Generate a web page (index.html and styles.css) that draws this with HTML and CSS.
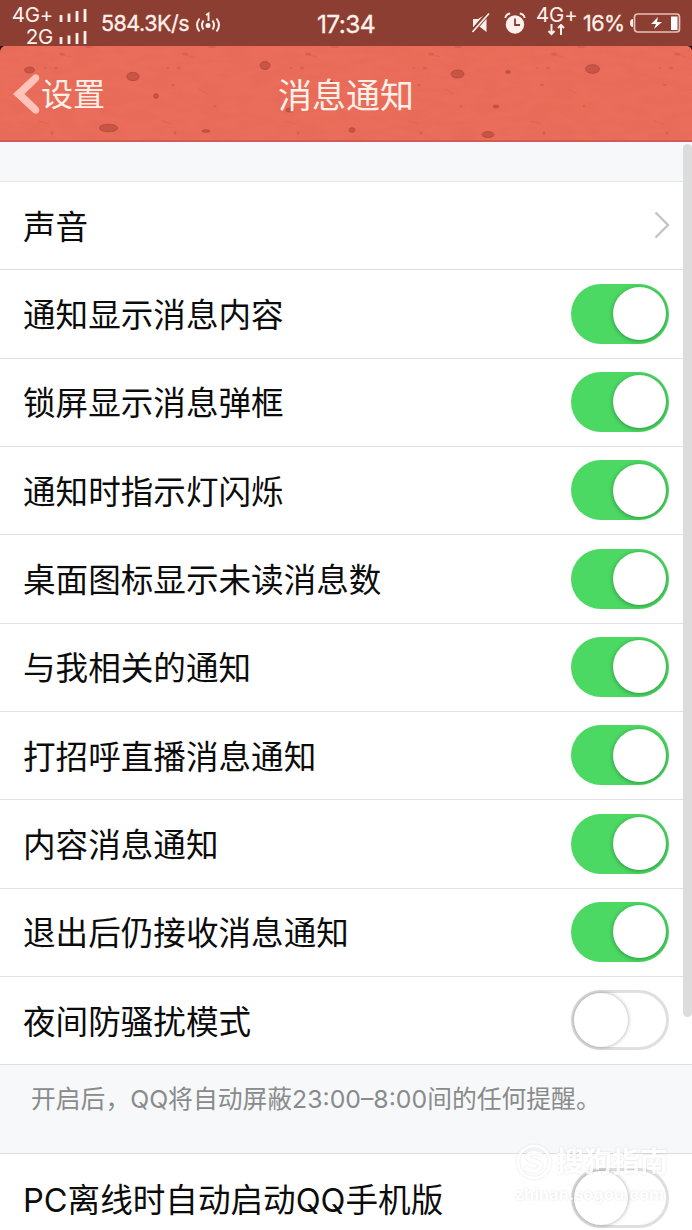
FILE: index.html
```
<!DOCTYPE html>
<html lang="zh-CN">
<head>
<meta charset="utf-8">
<title>消息通知</title>
<link rel="stylesheet" href="styles.css">
</head>
<body>
<div class="screen">
  <div class="status">
    <div class="carriers">
      <div class="carrier"><span>4G+</span><svg width="28" height="15" viewBox="0 0 28 15"><path d="M2 7v7M10 5.500v8.500M18 3v11M26 1v13" stroke="#fff0eb" stroke-width="2.800"/></svg></div>
      <div class="carrier second"><span>2G</span><svg width="28" height="15" viewBox="0 0 28 15"><path d="M2 7v7M10 5.500v8.500M18 3v11M26 1v13" stroke="#fff0eb" stroke-width="2.800"/></svg></div>
    </div>
    <span class="speed">584.3K/s</span>
    <svg class="hotspot" width="26" height="22" viewBox="0 0 26 22" fill="none" stroke="#fff0eb" stroke-width="1.900"><circle cx="13" cy="14.500" r="2.500" fill="#fff0eb" stroke="none"/><path d="M11 4l2.500-1.500V10M8.500 9.500q-3 4.500 0 9M17.500 9.500q3 4.500 0 9M4.500 7.500q-5 6.500 0 13M21.500 7.500q5 6.500 0 13"/></svg>
    <span class="clock">17:34</span>
    <svg class="mute" width="20" height="22" viewBox="0 0 20 22"><path d="M2 7h5l8.500-5v18L9 15H2z" fill="#fff0eb"/><path d="M1 20L17.500 1" stroke="#8b3e31" stroke-width="4.500"/><path d="M1.500 20L18 1.500" stroke="#fff0eb" stroke-width="1.700"/></svg>
    <svg class="alarm" width="22" height="22" viewBox="0 0 22 22" fill="none" stroke="#fff0eb" stroke-width="1.800"><circle cx="11" cy="12.500" r="9.200" fill="#fff0eb" stroke="none"/><path d="M1.200 6q1-4 5-4.500M20.800 6q-1-4-5-4.500"/><path d="M11 6.500v6.500h5" stroke="#8b3e31"/></svg>
    <div class="data"><span>4G+</span><svg width="18" height="12" viewBox="0 0 18 12" fill="none" stroke="#fff0eb" stroke-width="2"><path d="M4.500 0v10M1.500 7l3 3 3-3M14 11V1M11 4l3-3 3 3"/></svg></div>
    <span class="percent">16%</span>
    <svg class="battery" width="52" height="21" viewBox="0 0 52 21"><path d="M3 6Q0 6 0 10t3 4z" fill="#fff0eb"/><rect x="4.500" y="1" width="45" height="18" rx="3" fill="none" stroke="#e9c1b7" stroke-width="1.700"/><path d="M28 4l-7 7h5l-2 5 8-7h-5z" fill="#fff"/><rect x="41" y="3.500" width="6.500" height="13.500" fill="#fff"/></svg>
  </div>

  <header class="header">
    <svg class="texture" width="692" height="96" viewBox="0 0 692 96">
      <defs>
        <pattern id="specks" width="123" height="96" patternUnits="userSpaceOnUse">
          <g fill="#b84739" opacity=".32"><ellipse cx="62" cy="8" rx="3" ry="1.500"/><ellipse cx="56" cy="22" rx="2" ry="1.500"/><ellipse cx="50" cy="39" rx="2" ry="1.300"/><circle cx="92" cy="60" r="1.500"/><ellipse cx="52" cy="87" rx="1.500" ry="2"/><ellipse cx="45" cy="22" rx="1.500" ry="1"/><ellipse cx="89" cy="1" rx="4" ry="1"/></g>
          <path d="M63 9l8 2M76 43l9 5M39 75l10 3" fill="none" stroke="#bf4c3d" stroke-width="1.200" opacity=".22"/>
        </pattern>
        <filter id="grain" x="0" y="0" width="100%" height="100%"><feTurbulence type="fractalNoise" baseFrequency=".04 .12" numOctaves="3" seed="4"/><feColorMatrix values="0 0 0 0 .55 0 0 0 0 .12 0 0 0 0 .07 .6 0 0 0 -.22"/></filter>
      </defs>
      <rect width="692" height="96" fill="#ea6c5a"/>
      <rect width="692" height="96" filter="url(#grain)" opacity=".3"/>
      <rect width="692" height="96" fill="url(#specks)"/>
      <g fill="#c85445" stroke="#b04a3b" stroke-width=".8"><ellipse cx="29.500" cy="24" rx="5" ry="3"/><ellipse cx="133" cy="30.500" rx="6.200" ry="4.200"/><circle cx="156" cy="50" r="2.300"/><ellipse cx="108.500" cy="82" rx="9.200" ry="3.800"/><ellipse cx="206" cy="85" rx="4" ry="1.200"/><ellipse cx="265" cy="19.500" rx="5" ry="4"/><ellipse cx="290" cy="64" rx="4" ry="2"/><circle cx="331" cy="36" r="1.700"/><ellipse cx="352" cy="84" rx="3" ry="2.300"/><ellipse cx="457.500" cy="28" rx="6.500" ry="4"/><ellipse cx="508" cy="26" rx="2.300" ry="1.300"/><ellipse cx="496" cy="60.500" rx="3" ry="1.300"/><ellipse cx="488" cy="88.500" rx="6" ry="3"/><ellipse cx="592.500" cy="23" rx="7" ry="4.300"/></g>
      <path d="M0 95h692" stroke="#d35b53" stroke-width="2"/>
      <path d="M0 0h4Q1 1 0 5zM692 0h-4q3 1 4 4z" fill="#260c0a"/>
    </svg>
    <div class="back">
      <svg width="29" height="44" viewBox="0 0 29 44"><path d="M22.500 3L2 22l20.500 19q3 2 5.200-.8 1.500-2.700-.7-5.200L13.500 22 27 9q2.200-2.500.7-5.200-2.200-2.800-5.200-.8z" fill="#ffc3b9"/></svg>
      <span>设置</span>
    </div>
    <h1 class="title">消息通知</h1>
  </header>

  <main class="content">
    <div class="spacer"></div>
    <section class="rows">
      <div class="row"><span>声音</span><svg class="chevron" width="16" height="28" viewBox="0 0 16 28"><path d="M1.500 1.500L14 14 1.500 26.500" fill="none" stroke="#c3c3c6" stroke-width="2.400"/></svg></div>
      <div class="row"><span>通知显示消息内容</span><i class="toggle on"></i></div>
      <div class="row"><span>锁屏显示消息弹框</span><i class="toggle on"></i></div>
      <div class="row"><span>通知时指示灯闪烁</span><i class="toggle on"></i></div>
      <div class="row"><span>桌面图标显示未读消息数</span><i class="toggle on"></i></div>
      <div class="row"><span>与我相关的通知</span><i class="toggle on"></i></div>
      <div class="row"><span>打招呼直播消息通知</span><i class="toggle on"></i></div>
      <div class="row"><span>内容消息通知</span><i class="toggle on"></i></div>
      <div class="row"><span>退出后仍接收消息通知</span><i class="toggle on"></i></div>
      <div class="row"><span>夜间防骚扰模式</span><i class="toggle"></i></div>
    </section>
    <p class="hint">开启后，QQ将自动屏蔽23:00–8:00间的任何提醒。</p>
    <div class="row last"><span>PC离线时自动启动QQ手机版</span><i class="toggle"></i></div>
  </main>
  <div class="scrollbar"></div>
  <div class="watermark">
    <div class="brand"><svg width="38" height="38" viewBox="0 0 38 38" fill="none" stroke="#fff"><circle cx="19" cy="19" r="16" stroke-width="3"/><path d="M27 12q-8-4-13-1c-4 3 0 6 5 7s9 4 5 8q-5 4-14-1" stroke-width="4"/></svg><span>搜狗指南</span></div>
    <div class="url">zhinan.sogou.com</div>
  </div>
</div>
</body>
</html>
```
FILE: styles.css
```
* { box-sizing: border-box; }
body { margin: 0; font-family: Inter, "Noto Sans CJK SC", sans-serif; }
.screen { position: relative; width: 692px; height: 1230px; overflow: hidden; background: #fff; display: flex; flex-direction: column; }

.status { height: 46px; flex: none; display: flex; align-items: flex-start; background: #8b3e31; color: #fff0eb; line-height: 1; white-space: nowrap; }
.carriers { width: 87px; padding-top: 5px; display: flex; flex-direction: column; gap: 2px; }
.carrier { height: 20px; display: flex; justify-content: flex-end; gap: 6px; font-size: 20.5px; letter-spacing: -0.3px; }
.carrier svg { margin-top: 3px; }
.speed { width: 92px; margin: 13px 0 0 14px; font-size: 21.5px; letter-spacing: -0.5px; -webkit-text-stroke: 0.3px; }
.hotspot { margin: 11px 0 0 2px; }
.clock { width: 62px; margin: 12px 0 0 96px; font-size: 24.5px; letter-spacing: -0.6px; -webkit-text-stroke: 0.3px; }
.mute { margin: 12px 0 0 92px; }
.alarm { margin: 12px 0 0 13px; }
.data { width: 42px; height: 40px; margin: 5px 0 0 10px; display: flex; flex-direction: column; align-items: flex-start; font-size: 20.5px; letter-spacing: -0.2px; }
.data svg { margin: -2px 0 0 11px; }
.percent { width: 45px; margin: 13px 0 0 5px; font-size: 21.5px; letter-spacing: -0.5px; -webkit-text-stroke: 0.3px; }
.battery { margin: 13px 0 0 2px; }

.header { position: relative; height: 96px; flex: none; display: grid; grid-template-columns: 1fr auto 1fr; align-items: center; color: #fff0e8; }
.texture { position: absolute; inset: 0; }
.back { position: relative; display: flex; align-items: center; gap: 1px; padding-left: 11px; font-size: 32px; line-height: 44px; }
.back span { padding-top: 2px; }
.title { position: relative; margin: 4px 0 0; font-size: 34px; line-height: 44px; font-weight: 400; }

.content { flex: 1; }
.spacer { height: 40px; background: #f7f8fa; border-bottom: 1px solid #e4e5e6; }
.row { height: 88.35px; display: flex; align-items: center; justify-content: space-between; padding: 0 23px; border-bottom: 1px solid #dedfe0; font-size: 32.6px; line-height: 48px; color: #0c0c0c; white-space: nowrap; }
.row > span { padding-top: 2px; }
.chevron { margin: 0 -1px 2px 0; }
.toggle { width: 98px; height: 60px; margin-bottom: 1px; border-radius: 30px; border: 3px solid #dfdfdf; background: #fff; display: flex; align-items: center; }
.toggle::before { content: ""; width: 54px; height: 54px; border-radius: 50%; background: #fff; box-shadow: 0 0 4px rgba(0,0,0,.35); }
.toggle.on { border: 0; background: #4bd863; justify-content: flex-end; padding-right: 3px; }
.toggle.on::before { width: 53px; height: 53px; box-shadow: 0 1px 4px rgba(0,60,15,.45); }
.hint { margin: 0; height: 89px; padding: 15px 31px 0; background: #f7f8fa; border-bottom: 1px solid #dedfe0; font-size: 24.8px; line-height: 38px; color: #898b8b; white-space: nowrap; }
.last { border-bottom: 0; }

.scrollbar { position: absolute; right: 0; top: 144px; width: 9px; height: 873px; border-radius: 5px; background: #dcdcdc; }
.watermark { position: absolute; left: 515px; top: 1142px; color: #fff; filter: drop-shadow(0 0 1px rgba(0,0,0,.15)); opacity: .8; white-space: nowrap; }
.brand { display: flex; align-items: center; gap: 3px; font-size: 28px; line-height: 40px; font-weight: 700; }
.url { font-size: 16px; line-height: 24px; font-weight: 700; letter-spacing: .2px; }
```
